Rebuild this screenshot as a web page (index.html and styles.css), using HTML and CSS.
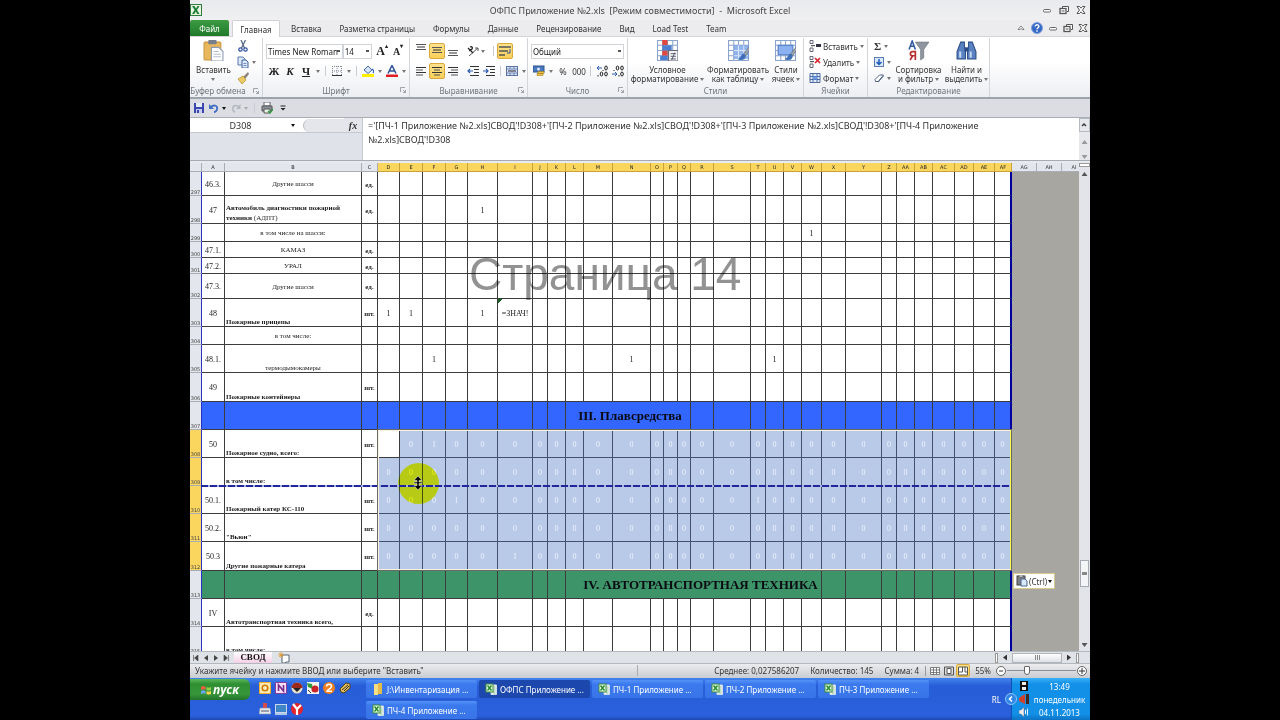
FILE: index.html
```html
<!DOCTYPE html>
<html lang="ru">
<head>
<meta charset="utf-8">
<title>ОФПС Приложение №2.xls</title>
<link rel="stylesheet" href="styles.css">
</head>
<body>
<svg class="defs" aria-hidden="true">
  <symbol id="grid" viewBox="0 0 20 20"><rect x=".5" y=".5" width="19" height="19" fill="#fff" stroke="#8aa4cc"/><path d="M.5 5h19M.5 10h19M.5 15h19M5.500 .5v19M10 .5v19M15 .5v19" stroke="#8aa4cc"/></symbol>
  <symbol id="al" viewBox="0 0 10 10"><path d="M0 1.500h10M0 6.500h10" stroke="#333"/><path d="M0 4h7M0 9h7" stroke="#555"/></symbol>
  <symbol id="ac" viewBox="0 0 10 10"><path d="M0 1.500h10M0 6.500h10" stroke="#333"/><path d="M2 4h6M2 9h6" stroke="#555"/></symbol>
  <symbol id="ar" viewBox="0 0 10 10"><path d="M0 1.500h10M0 6.500h10" stroke="#333"/><path d="M3 4h7M3 9h7" stroke="#555"/></symbol>
  <symbol id="vt" viewBox="0 0 10 10"><path d="M0 1.500h10M0 6.500h10" stroke="#555"/><path d="M1 4h8" stroke="#333"/></symbol>
  <symbol id="min" viewBox="0 0 10 10"><rect x="1.500" y="4.500" width="7" height="2.500" rx="1" fill="#fff" stroke="#666"/></symbol>
  <symbol id="res" viewBox="0 0 10 10"><path d="M3.500 3V1.500h6v5H8" fill="#fff" stroke="#555"/><rect x="1" y="3.500" width="6" height="5" fill="#fff" stroke="#555" stroke-width="1.300"/><path d="M2.500 6h3" stroke="#555"/></symbol>
  <symbol id="cls" viewBox="0 0 10 10"><path d="M1 1.500h2.500L5 3.200 6.500 1.500H9L6.500 5 9 8.500H6.500L5 6.800 3.500 8.500H1L3.500 5z" fill="#fff" stroke="#555"/></symbol>
  <symbol id="xl" viewBox="0 0 12 12"><path d="M6 2h5.500v9.500H6z" fill="#eef7ee" stroke="#cfdde8"/><path d="M8 4h2.500M8 6h2.500M8 8h2.500M8 10h2.500" stroke="#68a878" stroke-width=".7"/><rect x="1" y="1" width="7" height="8" fill="#e9ffe4" stroke="#3c8a40"/><path d="M2.500 2.500l4 5M6.500 2.500l-4 5" stroke="#23892b" stroke-width="1.400"/></symbol>
  <symbol id="brush" viewBox="0 0 12 14"><path d="M11.500 0L6 7l2 2 4-6z" fill="#9aa3ad" stroke="#666" stroke-width=".5"/><path d="M6 7c-3 0-2 4-6 5 3 2 8 1 8-3z" fill="#3f6fb6"/></symbol>
  <symbol id="launch" viewBox="0 0 6 6"><path d="M.5 5V.5H5M3 3l2.500 2.500M5.500 3v2.500H3" fill="none" stroke="#8a8f96" stroke-width=".8"/></symbol>
</svg>

<main class="app">
  <header class="title">
    <svg class="i12" viewBox="0 0 12 12"><rect x=".5" y=".5" width="11" height="11" fill="#e8f3e6" stroke="#2f7d3a"/><path d="M2 2h2.500L6 4.500 7.500 2H9.500L7 6l2.500 4H7.200L5.800 7.500 4.300 10H2l2.600-4z" fill="#1f7f34"/></svg>
    <h1>ОФПС Приложение №2.xls&nbsp; [Режим совместимости]&nbsp; -&nbsp; Microsoft Excel</h1>
    <div class="wins">
      <button aria-label="Свернуть"><svg class="i10"><use href="#min"/></svg></button>
      <button aria-label="Восстановить"><svg class="i10"><use href="#res"/></svg></button>
      <button aria-label="Закрыть"><svg class="i10"><use href="#cls"/></svg></button>
    </div>
  </header>

  <nav class="tabs">
    <button class="file">Файл</button>
    <button class="tab on">Главная</button>
    <button class="tab">Вставка</button>
    <button class="tab">Разметка страницы</button>
    <button class="tab">Формулы</button>
    <button class="tab">Данные</button>
    <button class="tab">Рецензирование</button>
    <button class="tab">Вид</button>
    <button class="tab">Load Test</button>
    <button class="tab">Team</button>
    <div class="wins">
      <button aria-label="Свернуть ленту"><svg class="i10" viewBox="0 0 10 10"><path d="M2 6.500L5 3l3 3.500H6.200L5 5.500 3.800 6.500z" fill="#fff" stroke="#666" stroke-width=".8"/></svg></button>
      <button aria-label="Справка"><svg class="i12" viewBox="0 0 12 12"><circle cx="6" cy="6" r="5.500" fill="#3567c4" stroke="#7fa1dd"/><path d="M4.200 4.500c0-2.400 3.700-2.300 3.700 0C7.900 5.800 6 5.800 6 7.300M6 8.300v1.400" fill="none" stroke="#fff" stroke-width="1.400"/></svg></button>
      <button aria-label="Свернуть книгу"><svg class="i10"><use href="#min"/></svg></button>
      <button aria-label="Восстановить книгу"><svg class="i10"><use href="#res"/></svg></button>
      <button aria-label="Закрыть книгу"><svg class="i10"><use href="#cls"/></svg></button>
    </div>
  </nav>

  <section class="ribbon">
    <div class="group g-clip">
      <div class="body">
        <button class="big"><svg class="i20" viewBox="0 0 20 20"><rect x="1" y="2" width="16" height="17" rx="1" fill="#e9b85c" stroke="#c9943c"/><rect x="5" y="0" width="8" height="4" rx="1" fill="#777f8c"/><path d="M8 7h7l4 4v9H8z" fill="#fff" stroke="#8c9bb5"/><path d="M10 11h5M10 13.500h7M10 16h7" stroke="#b4c0d2"/></svg><span>Вставить</span><i class="dd"></i></button>
        <div class="stack">
          <button aria-label="Вырезать"><svg class="i12" viewBox="0 0 12 12"><path d="M4 0l3.500 8M8.500 0L4.500 8" stroke="#5b6b86" stroke-width="1.300"/><circle cx="3.500" cy="9.500" r="1.700" fill="none" stroke="#2c4f9c" stroke-width="1.200"/><circle cx="8.500" cy="9.500" r="1.700" fill="none" stroke="#2c4f9c" stroke-width="1.200"/></svg></button>
          <button aria-label="Копировать"><svg class="i12" viewBox="0 0 12 12"><path d="M1 1h5l2 2v6H1z" fill="#dfe9f8" stroke="#5878ac"/><path d="M5 4h4l2 2v6H5z" fill="#dfe9f8" stroke="#3e62a2"/><path d="M6.500 7.500h3M6.500 9.500h3" stroke="#6f8fc4"/></svg><i class="dd"></i></button>
          <button aria-label="Формат по образцу"><svg class="i12" viewBox="0 0 12 12"><path d="M11 0L6 5l2 2 4-5z" fill="#8a8478"/><path d="M6 4L1 7l4 5 4-4z" fill="#eccb62" stroke="#b28a30" stroke-width=".7"/></svg></button>
        </div>
      </div>
      <div class="label">Буфер обмена<svg class="i6"><use href="#launch"/></svg></div>
    </div>

    <div class="group g-font">
      <div class="rows">
        <div class="row">
          <select class="sel s-font" aria-label="Шрифт"><option>Times New Roman</option></select><select class="sel s-size" aria-label="Размер"><option>14</option></select>
          <button class="ib serif f12" aria-label="Увеличить">A<sup>▴</sup></button>
          <button class="ib serif f10" aria-label="Уменьшить">A<sup>▾</sup></button>
        </div>
        <div class="row">
          <button class="ib serif f11"><b>Ж</b></button><button class="ib serif f11"><b><em>К</em></b></button><button class="ib serif f11"><b><u>Ч</u></b></button><i class="dd"></i><i class="sep"></i>
          <button class="ib" aria-label="Границы"><svg class="i10" viewBox="0 0 10 10"><path d="M.5 0v9M9.500 0v9M5 0v9M0 .5h10M0 5h10" fill="none" stroke="#889" stroke-dasharray="1 1"/><path d="M0 9.500h10" stroke="#333"/></svg></button><i class="dd"></i><i class="sep"></i>
          <button class="ib" aria-label="Заливка"><svg class="i12" viewBox="0 0 12 12"><path d="M2 5l4-4 4 4-4 3.500z" fill="#d7e4f6" stroke="#4a6aa4"/><path d="M10 4c2 1 2 3 1 4" stroke="#3567c4" fill="none" stroke-width="1.300"/><path d="M0 9h12v3H0z" fill="#ffee00"/></svg></button><i class="dd"></i>
          <button class="ib" aria-label="Цвет текста"><svg class="i12" viewBox="0 0 12 12"><path d="M2 8.500L6 .5l4 8M3.500 6h5" fill="none" stroke="#2c4f94" stroke-width="1.500"/><path d="M0 9.500h12V12H0z" fill="#e02020"/></svg></button><i class="dd"></i>
        </div>
      </div>
      <div class="label">Шрифт<svg class="i6"><use href="#launch"/></svg></div>
    </div>

    <div class="group g-align">
      <div class="rows">
        <div class="row">
          <button class="ib up" aria-label="Сверху"><svg class="i10"><use href="#vt"/></svg></button><button class="ib hot" aria-label="Посередине"><svg class="i10"><use href="#vt"/></svg></button><button class="ib low" aria-label="Снизу"><svg class="i10"><use href="#vt"/></svg></button>
          <button class="ib wide" aria-label="Ориентация"><svg class="i12" viewBox="0 0 12 12"><path d="M2 11l9-8M8 3h3v3" fill="none" stroke="#555"/><path d="M1 3l5 5M3 2c2-1 3 1 2 2s-3 1-2 2" fill="none" stroke="#222" stroke-width="1.300"/></svg><i class="dd"></i></button><i class="sep"></i>
          <button class="ib hot wrap" aria-label="Перенос текста"><svg class="i12" viewBox="0 0 12 12"><path d="M0 2h12M0 6h9M0 10h6" stroke="#555" stroke-width="1.500"/><path d="M11 4v4H8" fill="none" stroke="#2c4f9c"/></svg></button>
        </div>
        <div class="row">
          <button class="ib" aria-label="Влево"><svg class="i10"><use href="#al"/></svg></button><button class="ib hot" aria-label="По центру"><svg class="i10"><use href="#ac"/></svg></button><button class="ib" aria-label="Вправо"><svg class="i10"><use href="#ar"/></svg></button>
          <button class="ib ind" aria-label="Уменьшить отступ"><svg class="i12" viewBox="0 0 12 12"><path d="M3 1.500h9M7 4.500h5M7 7.500h5M3 10.500h9" stroke="#333"/><path d="M6 6H1M3 4L1 6l2 2" fill="none" stroke="#2c5cae" stroke-width="1.200"/></svg></button><button class="ib" aria-label="Увеличить отступ"><svg class="i12" viewBox="0 0 12 12"><path d="M3 1.500h9M7 4.500h5M7 7.500h5M3 10.500h9" stroke="#333"/><path d="M0 6h5M3 4l2 2-2 2" fill="none" stroke="#2c5cae" stroke-width="1.200"/></svg></button><i class="sep"></i>
          <button class="ib" aria-label="Объединить"><svg class="i12" viewBox="0 0 12 12"><rect x=".5" y="1.500" width="11" height="9" fill="#dbe7f8" stroke="#56729f"/><path d="M0 4h12M0 8h12M4 1v3M8 1v3M4 8v3M8 8v3" stroke="#56729f" stroke-width=".8"/><path d="M2 6h8" stroke="#223"/></svg></button><i class="dd"></i>
        </div>
      </div>
      <div class="label">Выравнивание<svg class="i6"><use href="#launch"/></svg></div>
    </div>

    <div class="group g-num">
      <div class="rows">
        <div class="row"><select class="sel s-num" aria-label="Числовой формат"><option>Общий</option></select></div>
        <div class="row">
          <button class="ib" aria-label="Денежный"><svg class="i12" viewBox="0 0 12 12"><rect x="0" y="1" width="11" height="6" fill="#4b79bd" stroke="#2d5490"/><circle cx="5.500" cy="4" r="1.500" fill="#dfe9f8"/><path d="M4 8.500h6v2H4zM5 6.500h6v2H5z" fill="#f0c34c" stroke="#a5801e" stroke-width=".6"/></svg></button><i class="dd"></i>
          <button class="ib f9">%</button><button class="ib">000</button><i class="sep"></i>
          <button class="ib" aria-label="Увеличить разрядность"><svg class="i12" viewBox="0 0 12 12"><path d="M6 3H1M3 1L1 3l2 2" fill="none" stroke="#2c5cae"/><ellipse cx="10" cy="3" rx="1.300" ry="2" fill="none" stroke="#222"/><path d="M7 5v1M2 10v1.500" stroke="#222"/><ellipse cx="5.500" cy="9" rx="1.300" ry="2" fill="none" stroke="#222"/><ellipse cx="10" cy="9" rx="1.300" ry="2" fill="none" stroke="#222"/></svg></button>
          <button class="ib" aria-label="Уменьшить разрядность"><svg class="i12" viewBox="0 0 12 12"><path d="M0 9h5M3 7l2 2-2 2" fill="none" stroke="#2c5cae"/><ellipse cx="10" cy="9" rx="1.300" ry="2" fill="none" stroke="#222"/><path d="M7 10v1.500M2 5v1" stroke="#222"/><ellipse cx="5.500" cy="3" rx="1.300" ry="2" fill="none" stroke="#222"/><ellipse cx="10" cy="3" rx="1.300" ry="2" fill="none" stroke="#222"/></svg></button>
        </div>
      </div>
      <div class="label">Число<svg class="i6"><use href="#launch"/></svg></div>
    </div>

    <div class="group g-style">
      <div class="body">
        <button class="big"><svg class="i20" viewBox="0 0 20 20"><use href="#grid"/><path d="M5 0h5v5H5zM5 10h5v5H5z" fill="#e0473f"/><path d="M5 5h9v5H5zM3 15h7v4H3z" fill="#4d7fd0"/><rect x="11" y="10" width="9" height="10" fill="#f4f6fa" stroke="#667"/><path d="M13 13h5M13 15.500h5M13 18h5M17 12l-3 7" stroke="#445" stroke-width=".8"/></svg><span>Условное<br>форматирование <i class="dd"></i></span></button>
        <button class="big"><svg class="i20" viewBox="0 0 20 20"><use href="#grid"/><path d="M5.500 5H20v13H5.500z" fill="#6d9be6" opacity=".75"/><path d="M5.500 10H19M5.500 15H19M10 5v14M15 5v14" stroke="#dbe7fa"/><use href="#brush" x="9" y="6" width="12" height="14"/></svg><span>Форматировать<br>как таблицу <i class="dd"></i></span></button>
        <button class="big"><svg class="i20" viewBox="0 0 20 20"><use href="#grid"/><path d="M3 5h14v9H3z" fill="#8cb1f0" stroke="#4d78c4"/><use href="#brush" x="9" y="6" width="12" height="14"/></svg><span>Стили<br>ячеек <i class="dd"></i></span></button>
      </div>
      <div class="label">Стили</div>
    </div>

    <div class="group g-cells">
      <div class="stack">
        <button><svg class="i12" viewBox="0 0 12 12"><path d="M1 .5h3v3H1zM1 8h3v3.500H1z" fill="#fff" stroke="#667"/><path d="M2 5.700h4" stroke="#333"/><rect x="7" y="4" width="5" height="3" fill="#334"/></svg>Вставить <i class="dd"></i></button>
        <button><svg class="i12" viewBox="0 0 12 12"><path d="M1 .5h3v3H1zM1 8h3v3.500H1z" fill="#fff" stroke="#667"/><path d="M1 5.700h4" stroke="#333"/><path d="M6 2l5 5M11 2L6 7" stroke="#d8262a" stroke-width="1.700"/></svg>Удалить <i class="dd"></i></button>
        <button><svg class="i12" viewBox="0 0 12 12"><path d="M1 1.500h10v9H1zM1 4.500h10M1 7.500h10M4 1v10M8 1v10" fill="#e5eefb" stroke="#4c6da3"/><path d="M4 4.500h4v3H4z" fill="#6b9be8"/></svg>Формат <i class="dd"></i></button>
      </div>
      <div class="label">Ячейки</div>
    </div>

    <div class="group g-edit">
      <div class="body">
        <div class="stack">
          <button class="sigma" aria-label="Сумма">Σ<i class="dd"></i></button>
          <button aria-label="Заполнить"><svg class="i10" viewBox="0 0 10 10"><rect x=".5" y=".5" width="9" height="9" fill="#dbe8fa" stroke="#5b7db3"/><path d="M5 2v5M2.500 5L5 7.500 7.500 5" fill="none" stroke="#1d5ab8" stroke-width="1.500"/></svg><i class="dd"></i></button>
          <button aria-label="Очистить"><svg class="i10" viewBox="0 0 10 10"><path d="M1 6.500L5.500 2h4L5 7.500v1H1.500z" fill="#fff" stroke="#54658a"/><path d="M5 8l4.500-5" stroke="#54658a"/></svg><i class="dd"></i></button>
        </div>
        <button class="big"><svg class="i20" viewBox="0 0 20 20"><path d="M1 9l3-8 3 8M2 6h4" fill="none" stroke="#31579f" stroke-width="1.500"/><path d="M7 19v-8H4.500C1.500 11 1.500 15 4.500 15H7M4.500 15L2 19" fill="none" stroke="#b5322e" stroke-width="1.600"/><path d="M7 2h13l-5 7v8l-3 2V9z" fill="#8f969f" stroke="#6b727b" stroke-width=".6"/></svg><span>Сортировка<br>и фильтр <i class="dd"></i></span></button>
        <button class="big"><svg class="i20" viewBox="0 0 20 20"><path d="M4.500 2h3.500v4l1 3v9H1v-7zM15.500 2H12v4l-1 3v9h8v-7z" fill="#5a82c0" stroke="#2b4d86"/><path d="M8 7h4v4H8z" fill="#2b4d86"/><path d="M3 11h2v6H3zM13 11h2v6h-2z" fill="#c3d5f0"/></svg><span>Найти и<br>выделить <i class="dd"></i></span></button>
      </div>
      <div class="label">Редактирование</div>
    </div>
  </section>

  <div class="qat">
    <button aria-label="Сохранить"><svg class="i10" viewBox="0 0 10 10"><path d="M0 0h10v10H0z" fill="#3b47ae"/><path d="M2 0h6v4H2z" fill="#e8ecfa"/><path d="M2 6h6v4H2z" fill="#c8cfee"/><path d="M3 7h2v3H3z" fill="#3b47ae"/></svg></button>
    <button aria-label="Отменить"><svg class="i10" viewBox="0 0 10 10"><path d="M2 4c3-3 7-1 6 2 0 2-2 3-3 3" fill="none" stroke="#3e6fc4" stroke-width="1.800"/><path d="M0 1v5h5z" fill="#3e6fc4"/></svg><i class="dd k"></i></button>
    <button aria-label="Вернуть"><svg class="i10" viewBox="0 0 10 10"><path d="M8 4C5 1 1 3 2 6c0 2 1 3 2 3" fill="none" stroke="#b4b7bd" stroke-width="1.500"/><path d="M9.500 1v5H5z" fill="#b4b7bd"/></svg><i class="dd lt"></i></button>
    <i class="sep"></i>
    <button aria-label="Печать"><svg class="i12" viewBox="0 0 12 12"><path d="M3 0h6v4H3z" fill="#fff" stroke="#667"/><path d="M1 4h10v5H1z" fill="#8b929c" stroke="#555"/><path d="M3 7h6v4H3z" fill="#e9f5e9" stroke="#555"/><path d="M7 9l2 2 3-4" fill="none" stroke="#2c9a3c" stroke-width="1.300"/></svg></button>
    <button aria-label="Настройка"><svg class="i10" viewBox="0 0 10 10"><path d="M2.500 3h5" stroke="#222"/><path d="M2.500 5h5L5 7.500z" fill="#222"/></svg></button>
  </div>

  <section class="fbar">
    <div class="fleft">
      <input class="name" aria-label="Имя" value="D308"><i class="dd k"></i>
      <i class="knob"></i><button class="fx">fx</button>
    </div>
    <textarea class="formula" aria-label="Строка формул" spellcheck="false">='[ПЧ-1 Приложение №2.xls]СВОД'!D308+'[ПЧ-2 Приложение №2.xls]СВОД'!D308+'[ПЧ-3 Приложение №2.xls]СВОД'!D308+'[ПЧ-4 Приложение
№2.xls]СВОД'!D308</textarea>
    <div class="fscroll"><button class="up1" aria-label="Свернуть строку"><svg class="i8" viewBox="0 0 8 8"><path d="M2 5l2-2 2 2" fill="none" stroke="#333" stroke-width="1.300"/></svg></button><i class="tu g"></i><i class="td g"></i></div>
  </section>

  <section class="work">
    <div class="sheet">
      <table id="grid-table"></table>
      <div class="outside"><div class="ohead"><span>AG</span><span>AH</span><span>AI</span></div></div>
      <div class="mark">Страница 14</div>
      <div class="halo"></div>
      <div class="pagebreak"></div>
      <div class="selbox"></div>
      <svg class="cursor" viewBox="0 0 10 14"><path d="M5 0l4 4.500H6V6h3v1.500H6V9.500h3L5 14 1 9.500h3V7.500H1V6h3V4.500H1z" fill="#000" stroke="#fff" stroke-width=".5"/></svg>
      <button class="paste"><svg class="i12" viewBox="0 0 12 12"><rect x="1" y="1" width="8" height="9" fill="#7b7f84" stroke="#444"/><path d="M3 0h4v2H3z" fill="#ddd" stroke="#555" stroke-width=".6"/><path d="M5 4h4l2 2v5H5z" fill="#dce9fb" stroke="#46668f"/></svg>(Ctrl)<i class="dd k"></i></button>
    </div>
    <div class="vscroll"><i class="split"></i><i class="tu"></i><i class="thumb"></i><i class="td"></i></div>
  </section>

  <footer class="sheets">
    <button aria-label="Первый"><svg class="i8" viewBox="0 0 8 8"><path d="M1.500 1v6M6 1v6L2.500 4z" fill="#444" stroke="#444" stroke-width=".6"/></svg></button>
    <button aria-label="Предыдущий"><svg class="i8" viewBox="0 0 8 8"><path d="M6 1v6L2 4z" fill="#444"/></svg></button>
    <button aria-label="Следующий"><svg class="i8" viewBox="0 0 8 8"><path d="M2 1v6l4-3z" fill="#444"/></svg></button>
    <button aria-label="Последний"><svg class="i8" viewBox="0 0 8 8"><path d="M6.500 1v6M2 1v6l3.500-3z" fill="#444" stroke="#444" stroke-width=".6"/></svg></button>
    <button class="stab">СВОД</button>
    <button class="new" aria-label="Новый лист"><svg class="i12" viewBox="0 0 12 12"><path d="M4 3h7v7H8l-1 1H4z" fill="#fff" stroke="#567"/><path d="M3 0v6M0 3h6M1 1l4 4M5 1L1 5" stroke="#e0982e" stroke-width=".8"/></svg></button>
    <div class="hscroll"><i class="grip"></i><i class="tl"></i><i class="hthumb"></i><i class="tr"></i><i class="grip"></i></div>
  </footer>

  <footer class="status">
    <span class="hint">Укажите ячейку и нажмите ВВОД или выберите "Вставить"</span>
    <span class="stats"><span>Среднее: 0,027586207</span><span>Количество: 145</span><span>Сумма: 4</span></span>
    <i class="sep"></i>
    <button class="vb" aria-label="Обычный"><svg class="i10" viewBox="0 0 10 10"><path d="M.5 1.500h9v7h-9zM.5 4h9M.5 6.500h9M3.500 1.500v7M6.500 1.500v7" fill="#fff" stroke="#666" stroke-width=".8"/></svg></button>
    <button class="vb" aria-label="Разметка"><svg class="i10" viewBox="0 0 10 10"><path d="M.5 1h9v8h-9z" fill="#ddd" stroke="#555"/><path d="M3 2.500h4v5H3z" fill="#fff" stroke="#555"/></svg></button>
    <button class="vb hot" aria-label="Страничный"><svg class="i10" viewBox="0 0 10 10"><path d="M.5 1h9v8h-9z" fill="#fff" stroke="#555"/><path d="M4.500 1v5H.5M7 1v5h3" fill="none" stroke="#555"/></svg></button>
    <label class="pct" for="zoom">55%</label>
    <button class="circ" aria-label="Мельче"><svg class="i8" viewBox="0 0 8 8"><path d="M2 4h4" stroke="#333"/></svg></button>
    <input id="zoom" class="zoom" type="range" min="0" max="100" value="27">
    <button class="circ" aria-label="Крупнее"><svg class="i8" viewBox="0 0 8 8"><path d="M1 4h6M4 1v6" stroke="#333"/></svg></button>
  </footer>

  <footer class="taskbar">
    <button class="start"><svg class="i10" viewBox="0 0 10 10"><path d="M0 2c2-1.500 3-1 4.500 0v3C3 4 2 4 0 5z" fill="#e8603c"/><path d="M5.500 2C7 3 8 3 10 2v3C8 6 7 6 5.500 5z" fill="#8fd04c"/><path d="M0 6c2-1 3-1 4.500 0v3C3 8 2 8 0 9z" fill="#6aa5f4"/><path d="M5.500 6C7 7 8 7 10 6v3C8 10 7 10 5.500 9z" fill="#f6d24a"/></svg>пуск</button>
    <div class="quick">
      <svg class="i12" viewBox="0 0 12 12"><rect width="12" height="12" rx="1" fill="#f3b02e"/><rect x="1" y="1" width="10" height="10" fill="#ffe9b0"/><circle cx="6" cy="6" r="2.800" fill="none" stroke="#c97f10" stroke-width="1.600"/></svg>
      <svg class="i12" viewBox="0 0 12 12"><rect width="12" height="12" rx="1" fill="#8e3c9c"/><rect x="1" y="1" width="10" height="10" fill="#f3dff6"/><path d="M3.500 9V3l5 6V3" fill="none" stroke="#7a2a8a" stroke-width="1.600"/></svg>
      <svg class="i12" viewBox="0 0 12 12"><circle cx="6" cy="6" r="5.500" fill="#e9dfce"/><path d="M.5 6a5.500 5.500 0 0111 0z" fill="#9c2a1c"/><path d="M2 6h8l-4 4z" fill="#222"/></svg>
      <svg class="i12" viewBox="0 0 12 12"><rect width="12" height="12" fill="#f3f3ec"/><path d="M0 1l5 1 1 5-5-2z" fill="#2f9a3a"/><circle cx="8" cy="7" r="3.500" fill="#c9232a"/><path d="M1 8l3 3" stroke="#333"/></svg>
      <svg class="i12" viewBox="0 0 12 12"><circle cx="6" cy="6" r="6" fill="#f07f1e"/><path d="M3.500 4.500c0-3 5-3 5 0C8.500 6.500 4 8 4 9.200h5" fill="none" stroke="#fff" stroke-width="1.500"/></svg>
      <svg class="i12" viewBox="0 0 12 12"><path d="M1 7l6-6 4 1v4l-6 5-3-1z" fill="#e7bd55" stroke="#54421a"/><path d="M3 8l6-5M5 9l5-5" stroke="#333"/></svg>
      <svg class="i12" viewBox="0 0 12 12"><path d="M4 0h4v5H4z" fill="#d84b4b"/><path d="M1 5h10l1 6H0z" fill="#e4e8f0" stroke="#8a93a5" stroke-width=".6"/><path d="M2 8h8" stroke="#556"/></svg>
      <svg class="i12" viewBox="0 0 12 12"><rect x=".5" y="1.500" width="11" height="8" fill="#3f86c8" stroke="#c9d8ea"/><path d="M0 11h12" stroke="#dfe6ef" stroke-width="1.500"/></svg>
      <svg class="i12" viewBox="0 0 12 12"><circle cx="6" cy="6" r="6" fill="#e3242b"/><path d="M2 1l4 5 4-4M6 6v6" fill="none" stroke="#fff" stroke-width="2.200"/></svg>
    </div>
    <div class="tasks">
      <button><svg class="i12" viewBox="0 0 12 12"><path d="M2 1h4v11H2z" fill="#f7dd84"/><path d="M6 0h4v11H6z" fill="#e5bb4c"/></svg>J:\Инвентаризация ...</button>
      <button class="cur"><svg class="i12"><use href="#xl"/></svg>ОФПС Приложение ...</button>
      <button><svg class="i12"><use href="#xl"/></svg>ПЧ-1 Приложение ...</button>
      <button><svg class="i12"><use href="#xl"/></svg>ПЧ-2 Приложение ...</button>
      <button><svg class="i12"><use href="#xl"/></svg>ПЧ-3 Приложение ...</button>
      <button><svg class="i12"><use href="#xl"/></svg>ПЧ-4 Приложение ...</button>
    </div>
    <span class="lang">RL</span>
    <div class="tray">
      <button class="chev" aria-label="Скрыть значки"><svg class="i12" viewBox="0 0 12 12"><circle cx="6" cy="6" r="5.500" fill="#2f86e6" stroke="#8cc4f8"/><path d="M7 3.500L4.500 6 7 8.500" fill="none" stroke="#fff" stroke-width="1.500"/></svg></button>
      <div class="ticons">
        <svg class="i10" viewBox="0 0 10 10"><rect x="1" width="8" height="10" fill="#111"/><path d="M3 1h4v3H3zM3 6h4v3H3z" fill="#eee"/></svg>
        <svg class="i10" viewBox="0 0 10 10"><path d="M0 4l6-4v10L0 7z" fill="#d0402c"/><path d="M7 0h3v10H7z" fill="#40281e"/></svg>
        <svg class="i10" viewBox="0 0 10 10"><path d="M0 3h2l3-3v10L2 7H0z" fill="#e8ecef" stroke="#667" stroke-width=".5"/><path d="M6.500 3v4M8.500 1.500v7" stroke="#eaf6ff"/></svg>
      </div>
      <div class="clock"><span>13:49</span><span>понедельник</span><span>04.11.2013</span></div>
    </div>
  </footer>
</main>
<script src="sheet.js"></script>
</body>
</html>
```
FILE: styles.css
```css
* { box-sizing: border-box; }
body { margin: 0; background: #000; font-family: "Noto Sans", "Open Sans", sans-serif; font-size: 8px; color: #333; }
button, input, select, textarea { font: inherit; color: inherit; margin: 0; padding: 0; border: 0; background: none; }
i, em { font-style: normal; }
em { font-style: italic; }
svg { display: block; flex: none; }
.defs { position: absolute; width: 0; height: 0; }
.i6 { width: 6px; height: 6px; }
.i8 { width: 8px; height: 8px; }
.i10 { width: 10px; height: 10px; }
.i12 { width: 12px; height: 12px; }
.i20 { width: 21px; height: 21px; }

.app { margin: 0 190px; height: 100vh; display: flex; flex-direction: column; background: #e9eaed; overflow: hidden; }

.title { display: flex; align-items: center; height: 20px; padding: 0 4px 0 0; background: linear-gradient(#e9eaed, #f0f0f2); flex: none; }
.title h1 { flex: 1; margin: 0; text-align: center; font-size: 9px; font-weight: 400; color: #444; white-space: nowrap; padding-left: 36px; }
.wins { display: flex; gap: 7px; align-items: center; }

.tabs { display: flex; height: 17px; align-items: stretch; padding-right: 2px; background: #ececee; border-bottom: 1px solid #d3d5d9; flex: none; }
.tabs .wins { margin-left: auto; gap: 5px; }
.file { width: 39px; background: linear-gradient(#3d9b42, #1f7a2a); color: #fff; border-radius: 2px 2px 0 0; }
.tab { padding: 0 9px; white-space: nowrap; }
.tab.on { width: 48px; margin: 0 2px -1px 3px; padding: 0; background: #fff; border: 1px solid #cdd0d5; border-bottom: 0; border-radius: 2px 2px 0 0; }

.ribbon { display: flex; height: 62px; padding-top: 1px; background: linear-gradient(#fff 40%, #eceef2); border-bottom: 2px solid #9da3ab; flex: none; }
.group { display: flex; flex-direction: column; border-right: 1px solid #d2d5da; flex: none; }
.g-clip { width: 73px; }
.g-font { width: 147px; }
.g-align { width: 118px; }
.g-num { width: 100px; }
.g-style { width: 176px; }
.g-cells { width: 64px; }
.g-edit { width: 122px; }
.body { flex: 1; display: flex; justify-content: space-evenly; align-items: flex-start; padding-top: 2px; }
.label { height: 14px; display: flex; align-items: center; justify-content: center; color: #70757d; white-space: nowrap; position: relative; }
.label .i6 { position: absolute; right: 3px; top: 4px; }
.g-clip .label { padding-right: 16px; }
.big { display: flex; flex-direction: column; align-items: center; line-height: 9px; gap: 4px; white-space: nowrap; }
.big .dd { margin: 0; }
.g-edit .body { justify-content: flex-start; gap: 5px; padding-left: 6px; }
.g-edit .big { width: 43px; }
.g-edit .stack { width: 18px; padding: 0; }
.stack { display: flex; flex-direction: column; gap: 4px; flex: none; }
.stack button { display: flex; align-items: center; gap: 3px; height: 12px; white-space: nowrap; }
.g-cells .stack { flex: 1; padding: 2px 0 0 5px; gap: 4px; }
.g-cells .stack button { gap: 2px; }
.sigma { font-family: "Liberation Serif", serif; font-weight: 700; font-size: 11px; }
.dd { display: inline-block; flex: none; border: 2px solid transparent; border-top: 3px solid #777; border-bottom: 0; width: 4px; vertical-align: middle; }
.dd.k { border-top-color: #111; }
.dd.lt { border-top-color: #aaa; }
.rows { flex: 1; display: flex; flex-direction: column; padding: 5px 3px 0; gap: 4px; }
.row { display: flex; align-items: center; height: 16px; }
.row .dd { margin: 0 2px; }
.sep { width: 1px; height: 10px; background: #c9ccd2; margin: 0 3px; flex: none; }
.ib { width: 16px; height: 16px; display: flex; align-items: center; justify-content: center; flex: none; }
.ib.up { align-items: flex-start; }
.ib.low { align-items: flex-end; }
.ib.wide { width: 26px; margin-left: 3px; }
.ib.wrap { margin-left: 0; }
.ib.ind { margin-left: 4px; }
.hot { background: linear-gradient(#fde38d, #f9cf58); border: 1px solid #d9a93c; border-radius: 2px; }
.serif { font-family: "Liberation Serif", serif; font-weight: 700; color: #222; }
.ib sup { font-size: 6px; line-height: 6px; align-self: flex-start; }
.f9 { font-size: 9px; } .f10 { font-size: 10px; } .f11 { font-size: 11px; } .f12 { font-size: 12px; }
.sel { appearance: none; height: 15px; border: 1px solid #d0d3d8; padding: 0 1px; color: #222;
  background: linear-gradient(#555, #555) right 2px center / 3px 2px no-repeat #fff; }
.s-font { width: 79px; } .s-size { width: 30px; margin-right: 2px; }
.s-num { width: 95px; }

.qat { display: flex; align-items: center; gap: 5px; height: 19px; padding-left: 4px; background: #dbdde2; border-bottom: 1px solid #a9adb4; flex: none; }
.qat button { display: flex; align-items: center; gap: 3px; }
.qat .sep { margin: 0 1px; }

.fbar { display: flex; height: 43px; border-bottom: 1px solid #a6aab2; background: #fff; flex: none; }
.fleft { width: 172px; display: flex; align-items: center; height: 15px; border-bottom: 1px solid #c5c8ce; background: #fff; box-shadow: 0 27px 0 0 #dfe2e8, 0 14px 0 0 #dfe2e8; flex: none; }
.name { width: 101px; height: 14px; text-align: center; font-size: 9px; color: #333; }
.knob { height: 13px; margin-left: 8px; border-left: 1px solid #b5b9c0; border-radius: 7px 0 0 7px; background: #e4e6eb; flex: 1; }
.fx { width: 18px; height: 14px; background: #e4e6eb; font: italic 700 10px "Liberation Serif", serif; }
.formula { flex: 1; min-width: 0; resize: none; overflow: hidden; font-size: 9px; line-height: 14px; padding: 1px 5px 0; border-left: 1px solid #c5c8ce; outline: 0; white-space: pre; }
.fscroll { width: 11px; background: #e6e8ec; display: flex; flex-direction: column; align-items: center; gap: 8px; flex: none; }
.up1 { width: 11px; height: 14px; border: 1px solid #b5b9c0; }
.tu, .td { width: 6px; height: 4px; background: #555; clip-path: polygon(50% 0, 100% 100%, 0 100%); flex: none; }
.td { clip-path: polygon(0 0, 100% 0, 50% 100%); }
.tu.g, .td.g { background: #999; }
.fscroll .td { margin-top: 3px; }

.work { flex: 1; min-height: 0; display: flex; padding-top: 2px; }
.sheet { flex: 1; min-width: 0; display: flex; align-items: flex-start; position: relative; overflow: hidden; background: #a7a6a1; }
table { table-layout: fixed; width: 822px; border-spacing: 0; flex: none; background: #fff; font-family: "Liberation Serif", serif; font-size: 8px; line-height: 10px; color: #222; }
td, th { padding: 0; border: 0 solid #3c3c3c; border-width: 0 1px 1px 0; text-align: center; vertical-align: middle; white-space: nowrap; overflow: hidden; font-weight: 400; }
tbody td { padding-top: 2px; }
thead th { height: 9px; font: 5px/8px "DejaVu Sans", sans-serif; background: #e3e6ec; border-color: #a9adb5; }
thead th.y { background: #fbd65f; border-color: #c9a23b; }
tbody th { background: #e3e6ec; font: 5px/6px "DejaVu Sans", sans-serif; vertical-align: bottom; border-color: #3038c0 #2a32c4 #a9adb5; color: #444; }
tbody th.y { background: #fbd65f; }
td.b { font-size: 7px; line-height: 9px; }
td.bl { vertical-align: bottom; text-align: left; padding-left: 1px; font-weight: 700; font-size: 7px; line-height: 7px; }
td.bl.mid { white-space: pre; line-height: 10px; padding-top: 0; }
td.bl span { font-weight: 400; }
td.u { font-weight: 700; font-size: 7px; }
td.bc { vertical-align: bottom; font-size: 7px; line-height: 7px; }
td:last-child { border-right: 2px solid #00009c; }
tr.blue td { background: #3366ff; }
tr.green td { background: #3d9468; }
tr.blue td, tr.green td { font-size: 13px; line-height: 16px; font-weight: 700; color: #0a0a12; padding-top: 0; }
td.head { text-align: center; overflow: visible; }
tr.blue td.head { padding-left: 4px; }
tr.green td.head { padding-left: 14px; }
td.s { background: #b8cae8; color: #eef3fc; border-color: #42526e; }
td.err { background: linear-gradient(135deg, #17601f 3px, transparent 3px); }
.outside { flex: 1; min-width: 0; }
.ohead { display: flex; height: 9px; overflow: hidden; background: #e3e6ec; border-bottom: 1px solid #a9adb5; font: 5px/8px "DejaVu Sans", sans-serif; }
.ohead span { width: 25px; flex: none; text-align: center; border-right: 1px solid #a9adb5; }
.mark { position: absolute; left: 279px; top: 85px; font: 46px/52px "Liberation Sans", sans-serif; color: #929292; mix-blend-mode: multiply; white-space: nowrap; }
.halo { position: absolute; left: 208px; top: 300px; width: 41px; height: 41px; border-radius: 50%; background: #feff18; mix-blend-mode: multiply; }
.pagebreak { position: absolute; left: 11px; width: 810px; top: 322px; height: 2px; background: repeating-linear-gradient(90deg, #20279c 0 7px, #a9b4de 7px 9px); }
.selbox { position: absolute; left: 187px; top: 266px; width: 635px; height: 142px; border: 2px solid #f7f3df; border-right: 2px solid #fdfb4a; outline: 1px solid #6b6b66; outline-offset: -1px; }
.cursor { position: absolute; left: 223px; top: 313px; width: 10px; height: 14px; }
.paste { position: absolute; left: 823px; top: 410px; height: 16px; display: flex; align-items: center; gap: 1px; padding: 0 2px; background: #fff; border: 1px solid #d9c98a; }
.vscroll { width: 11px; background: #e2e4e9; display: flex; flex-direction: column; align-items: center; padding-bottom: 4px; flex: none; }
.split { width: 11px; height: 4px; background: #fff; border: 1px solid #999; margin-bottom: 5px; }
.thumb { width: 9px; height: 27px; border: 1px solid #a5a9b0; background: linear-gradient(#888, #888) center / 5px 3px no-repeat #f4f5f7; margin: auto 0 56px; }

.sheets { display: flex; align-items: center; height: 12px; background: #dfe2e7; border-top: 1px solid #b3b7be; padding-left: 2px; gap: 2px; flex: none; }
.stab { width: 38px; height: 11px; margin-left: 2px; background: linear-gradient(#fff, #f5cfe6); font: 700 9px/11px "Liberation Serif", serif; color: #111; }
.new { margin-left: 4px; }
.hscroll { margin-left: auto; display: flex; align-items: center; gap: 4px; padding-right: 11px; }
.grip { width: 3px; height: 10px; border: 1px solid #999; background: #fff; }
.tl, .tr { width: 4px; height: 6px; background: #333; clip-path: polygon(0 50%, 100% 0, 100% 100%); margin: 0 1px; }
.tr { clip-path: polygon(0 0, 100% 50%, 0 100%); }
.hthumb { width: 50px; height: 10px; background: repeating-linear-gradient(90deg, #888 0 1px, transparent 1px 2px) center / 5px 5px no-repeat, linear-gradient(#fff, #dde0e5); border: 1px solid #b0b4bb; }

.status { display: flex; align-items: center; height: 15px; background: linear-gradient(#ececee, #c9ccd1); border-top: 1px solid #b3b7be; padding: 0 3px 1px 5px; flex: none; white-space: nowrap; }
.hint { flex: 1; max-width: 443px; border-right: 1px solid #aaa; }
.stats { margin-left: auto; display: flex; gap: 11px; }
.status .sep { margin: 0 2px 0 6px; background: #999; }
.vb { width: 14px; height: 13px; display: flex; align-items: center; justify-content: center; }
.pct { margin: 0 5px; }
.circ { width: 10px; height: 10px; border: 1px solid #666; border-radius: 50%; background: #fff; flex: none; }
.zoom { appearance: none; width: 69px; height: 12px; margin: 0 1px; background: linear-gradient(#8a8e95, #8a8e95) center / 100% 1px no-repeat; }
.zoom::-webkit-slider-thumb { appearance: none; width: 6px; height: 9px; border: 1px solid #666; border-radius: 1px 1px 3px 3px; background: #fff; }

.taskbar { display: flex; height: 42px; background: linear-gradient(#4283ee, #275dd6 8px, #2a60dc 38px, #1d47b0); align-items: flex-start; flex: none; color: #fff; }
.start { width: 60px; height: 21px; margin-top: 1px; display: flex; align-items: center; justify-content: center; gap: 2px; font: italic 700 12px "Open Sans", sans-serif; color: #fff; background: linear-gradient(#5cb85a, #2f8f33 5px, #37963a 15px, #23732a); border-radius: 0 6px 6px 0; }
.quick { display: grid; grid-template-columns: repeat(6, 12px); gap: 9px 4px; margin: 4px 0 0 9px; }
.tasks { flex: 1; display: grid; grid-template-columns: repeat(auto-fill, 111px); gap: 3px 2px; margin: 2px 0 0 15px; }
.tasks button { display: flex; align-items: center; gap: 3px; height: 18px; padding-left: 6px; background: linear-gradient(#5593f7, #3b7aee 4px, #3874e8); border-radius: 2px; white-space: nowrap; }
.tasks .cur { background: #1c48ae; }
.lang { align-self: center; padding-right: 10px; }
.tray { display: flex; align-items: center; width: 79px; height: 42px; background: linear-gradient(#3ab2f8, #1290e8 6px, #1290e8 36px, #0c73c4); border-left: 1px solid #0b57b0; flex: none; }
.chev { margin-left: -7px; }
.ticons { display: grid; gap: 3px; margin-left: 2px; }
.clock { flex: 1; display: flex; flex-direction: column; text-align: center; line-height: 13px; }
```
FILE: sheet.js
```js
const names = ['A','B','C','D','E','F','G','H','I','J','K','L','M','N','O','P','Q','R','S','T','U','V','W','X','Y','Z','AA','AB','AC','AD','AE','AF'];
const widths = [23,137,16,22,23,23,22,30,35,15,18,18,29,38,13,14,13,23,37,15,18,18,20,24,36,15,18,18,22,19,21,17];

// n: row number, h: height, a/b/u: first three columns, k: class of column B, v: values by column
const rows = [
  {n:297,h:24,a:'46.3.',b:'Другие шасси',u:'ед.'},
  {n:298,h:28,a:'47',b:'Автомобиль диагностики пожарной\nтехники <span>(АДПТ)</span>',k:'bl mid',u:'ед.',v:{H:1}},
  {n:299,h:18,b:'в том числе на шасси:',v:{W:1}},
  {n:300,h:16,a:'47.1.',b:'КАМАЗ',u:'ед.'},
  {n:301,h:16,a:'47.2.',b:'УРАЛ',u:'ед.'},
  {n:302,h:25,a:'47.3.',b:'Другие шасси',u:'ед.'},
  {n:303,h:28,a:'48',b:'Пожарные прицепы',k:'bl',u:'шт.',v:{D:1,E:1,H:1,I:'=ЗНАЧ!'}},
  {n:304,h:18,b:'в том числе:'},
  {n:305,h:28,a:'48.1.',b:'термодымокамеры',k:'bc',v:{F:1,N:1,U:1}},
  {n:306,h:29,a:'49',b:'Пожарные контейнеры',k:'bl',u:'шт.'},
  {n:307,h:28,c:'blue',from:'L',to:'Q',t:'III. Плавсредства'},
  {n:308,h:28,a:'50',b:'Пожарное судно, всего:',k:'bl',u:'шт.',sel:1,v:{D:'',F:1}},
  {n:309,h:28,b:'в том числе:',k:'bl',sel:1},
  {n:310,h:28,a:'50.1.',b:'Пожарный катер КС-110',k:'bl',u:'шт.',sel:1,v:{G:1,T:1}},
  {n:311,h:28,a:'50.2.',b:'"Вьюн"',k:'bl',u:'шт.',sel:1},
  {n:312,h:29,a:'50.3',b:'Другие пожарные катера',k:'bl',u:'шт.',sel:1,v:{I:1}},
  {n:313,h:28,c:'green',from:'L',to:'W',t:'IV. АВТОТРАНСПОРТНАЯ ТЕХНИКА'},
  {n:314,h:28,a:'IV',b:'Автотранспортная техника всего,',k:'bl',u:'ед.'},
  {n:315,h:28,b:'в том числе:',k:'bl'}
];

let html = '<colgroup><col style="width:12px">' + widths.map(w => `<col style="width:${w}px">`).join('') + '</colgroup>';
html += '<thead><tr><th></th>' + names.map((n, i) => `<th class="${i > 2 ? 'y' : ''}">${n}</th>`).join('') + '</tr></thead><tbody>';
for (const r of rows) {
  html += `<tr class="${r.c || ''}" style="height:${r.h}px"><th class="${r.sel ? 'y' : ''}">${r.n}</th>`;
  const v = r.v || {};
  for (let i = 0; i < names.length; i++) {
    const n = names[i];
    if (r.from === n) {
      const span = names.indexOf(r.to) - i + 1;
      html += `<td class="head" colspan="${span}">${r.t}</td>`;
      i += span - 1;
    } else if (i === 0) html += `<td>${r.a || ''}</td>`;
    else if (i === 1) html += `<td class="${r.k || 'b'}">${r.b || ''}</td>`;
    else if (i === 2) html += `<td class="u">${r.u || ''}</td>`;
    else if (r.sel) html += `<td class="${v[n] === '' ? '' : 's'}">${n in v ? v[n] : 0}</td>`;
    else html += `<td class="${n === 'I' && v[n] ? 'err' : ''}">${n in v ? v[n] : ''}</td>`;
  }
  html += '</tr>';
}
document.getElementById('grid-table').innerHTML = html + '</tbody>';
```
